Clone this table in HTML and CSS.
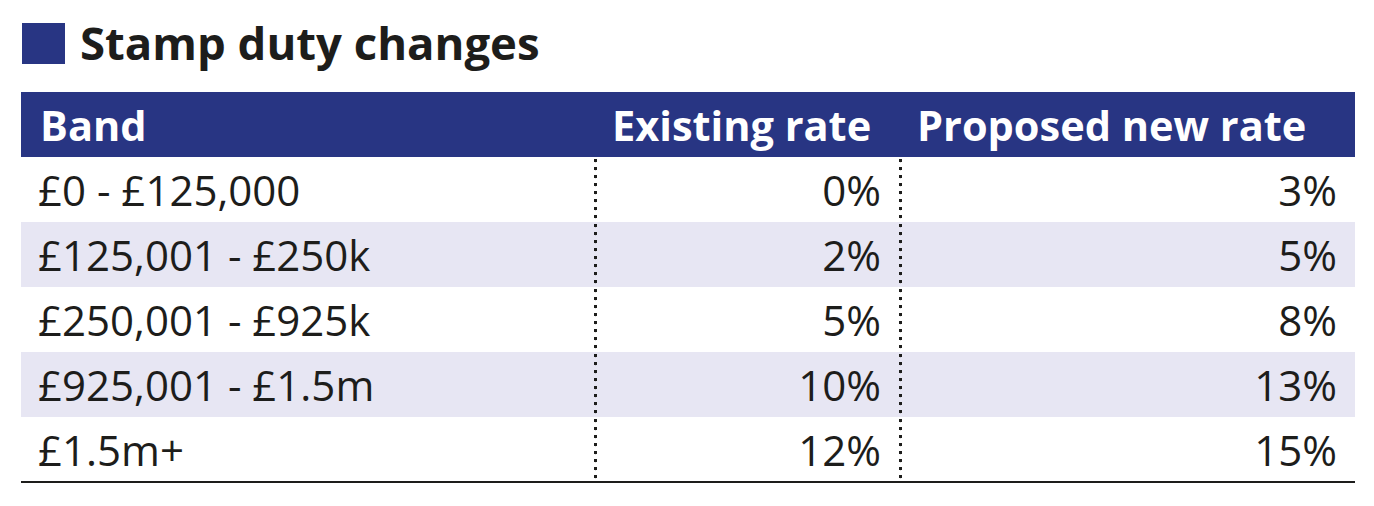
FILE: index.html
```html
<!DOCTYPE html>
<html>
<head>
<meta charset="utf-8">
<link rel="stylesheet" href="styles.css">
</head>
<body>
<div class="chart">
  <h1 class="title"><span class="marker"></span><span class="title-text">Stamp duty changes</span></h1>
  <table class="rates">
    <thead>
      <tr><th class="band">Band</th><th class="num">Existing rate</th><th class="num">Proposed new rate</th></tr>
    </thead>
    <tbody>
      <tr><td class="band">£0 - £125,000</td><td class="num">0%</td><td class="num">3%</td></tr>
      <tr class="alt"><td class="band">£125,001 - £250k</td><td class="num">2%</td><td class="num">5%</td></tr>
      <tr><td class="band">£250,001 - £925k</td><td class="num">5%</td><td class="num">8%</td></tr>
      <tr class="alt"><td class="band">£925,001 - £1.5m</td><td class="num">10%</td><td class="num">13%</td></tr>
      <tr><td class="band">£1.5m+</td><td class="num">12%</td><td class="num">15%</td></tr>
    </tbody>
  </table>
</div>
</body>
</html>
```
FILE: styles.css
```css
html, body {
  margin: 0;
  padding: 0;
  background: #ffffff;
}
body {
  font-family: "Open Sans", "DejaVu Sans", sans-serif;
  color: #1d1d1b;
}
.chart {
  padding: 23px 0 0 21px;
  width: 1334px;
}
.title {
  display: flex;
  align-items: center;
  gap: 15px;
  margin: 0 0 28px 0;
  height: 41px;
  font-size: 45.5px;
  font-weight: 700;
  line-height: 41px;
  color: #1d1d1b;
}
.marker {
  display: block;
  width: 43px;
  height: 41px;
  background: #283583;
  margin-left: 1px;
}
.title-text {
  margin-top: -3px;
}
.rates {
  width: 100%;
  border-collapse: collapse;
  table-layout: fixed;
}
.rates th {
  background: #283583;
  color: #ffffff;
  font-weight: 700;
  font-size: 41.5px;
  height: 65px;
  padding: 0 18px 0 18px;
  box-sizing: border-box;
  text-align: left;
  vertical-align: middle;
}
.rates th.band { width: 573px; padding-left: 19px; }
.rates th:nth-child(2) { width: 305px; }
.rates td {
  font-size: 42px;
  font-weight: 400;
  height: 65px;
  padding: 0 18px 0 17px;
  box-sizing: border-box;
  color: #1d1d1b;
  vertical-align: middle;
}
.rates td.num {
  text-align: right;
  padding-right: 18px;
}
.rates td + td {
  background-image: radial-gradient(circle at 1.5px 1.5px, #1d1d1b 1.5px, rgba(29, 29, 27, 0) 2.1px);
  background-size: 3px 8px;
  background-repeat: repeat-y;
  background-position: 0 2px;
}
.rates tr.alt td { background-color: #e7e6f3; }
.rates tbody tr:last-child td { border-bottom: 2px solid #1d1d1b; }
```
